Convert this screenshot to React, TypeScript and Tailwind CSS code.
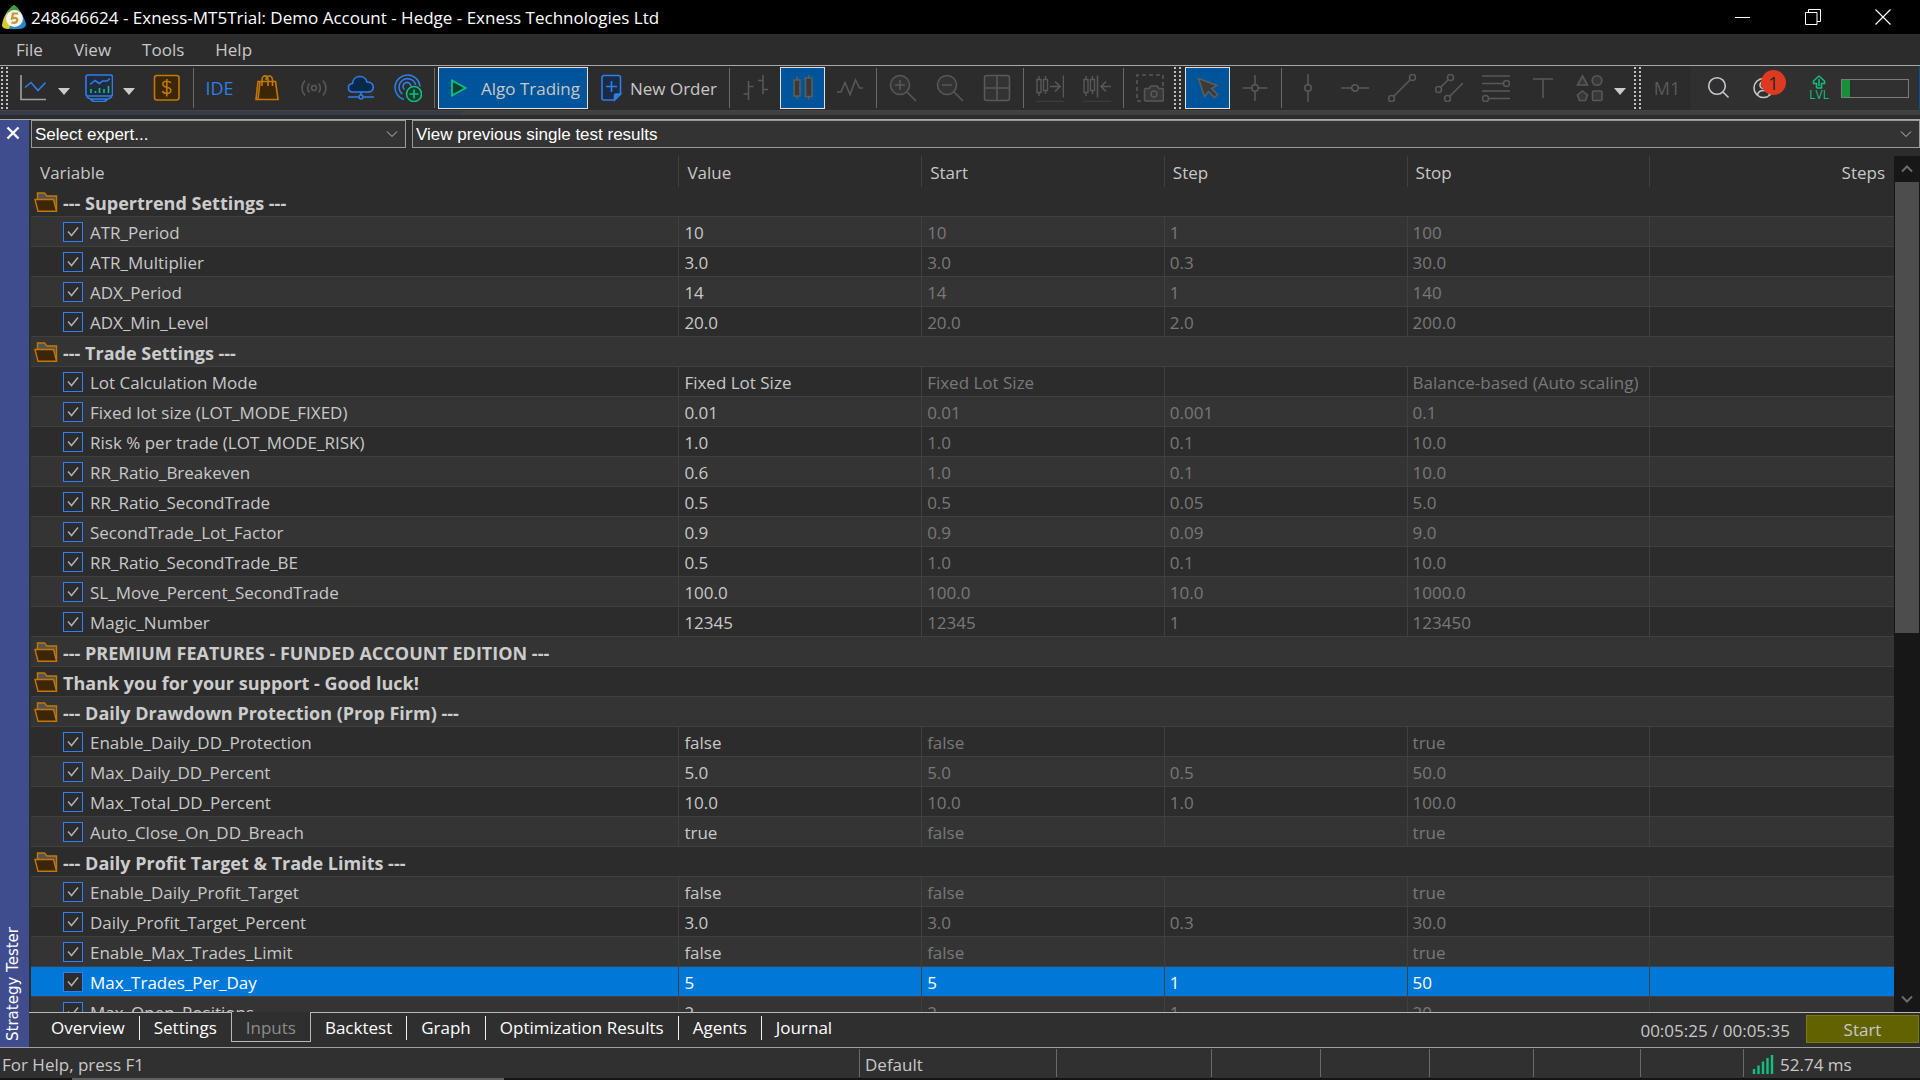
import React from 'react';

type Row = {
  group?: string;
  name?: string;
  value?: string;
  start?: string;
  step?: string;
  stop?: string;
  selected?: boolean;
};

const input = (name: string, value: string, start: string, step: string, stop: string, selected = false): Row => ({
  name, value, start, step, stop, selected
});

const rows: Row[] = [
  { group: '--- Supertrend Settings ---' },
  input('ATR_Period', '10', '10', '1', '100'),
  input('ATR_Multiplier', '3.0', '3.0', '0.3', '30.0'),
  input('ADX_Period', '14', '14', '1', '140'),
  input('ADX_Min_Level', '20.0', '20.0', '2.0', '200.0'),
  { group: '--- Trade Settings ---' },
  input('Lot Calculation Mode', 'Fixed Lot Size', 'Fixed Lot Size', '', 'Balance-based (Auto scaling)'),
  input('Fixed lot size (LOT_MODE_FIXED)', '0.01', '0.01', '0.001', '0.1'),
  input('Risk % per trade (LOT_MODE_RISK)', '1.0', '1.0', '0.1', '10.0'),
  input('RR_Ratio_Breakeven', '0.6', '1.0', '0.1', '10.0'),
  input('RR_Ratio_SecondTrade', '0.5', '0.5', '0.05', '5.0'),
  input('SecondTrade_Lot_Factor', '0.9', '0.9', '0.09', '9.0'),
  input('RR_Ratio_SecondTrade_BE', '0.5', '1.0', '0.1', '10.0'),
  input('SL_Move_Percent_SecondTrade', '100.0', '100.0', '10.0', '1000.0'),
  input('Magic_Number', '12345', '12345', '1', '123450'),
  { group: '--- PREMIUM FEATURES - FUNDED ACCOUNT EDITION ---' },
  { group: 'Thank you for your support - Good luck!' },
  { group: '--- Daily Drawdown Protection (Prop Firm) ---' },
  input('Enable_Daily_DD_Protection', 'false', 'false', '', 'true'),
  input('Max_Daily_DD_Percent', '5.0', '5.0', '0.5', '50.0'),
  input('Max_Total_DD_Percent', '10.0', '10.0', '1.0', '100.0'),
  input('Auto_Close_On_DD_Breach', 'true', 'false', '', 'true'),
  { group: '--- Daily Profit Target & Trade Limits ---' },
  input('Enable_Daily_Profit_Target', 'false', 'false', '', 'true'),
  input('Daily_Profit_Target_Percent', '3.0', '3.0', '0.3', '30.0'),
  input('Enable_Max_Trades_Limit', 'false', 'false', '', 'true'),
  input('Max_Trades_Per_Day', '5', '5', '1', '50', true),
  input('Max_Open_Positions', '2', '2', '1', '20')
];

const tabs = ['Overview', 'Settings', 'Inputs', 'Backtest', 'Graph', 'Optimization Results', 'Agents', 'Journal'];

type IconProps = { children: React.ReactNode; className?: string };

const Icon = ({ children, className = 'text-[#585858]' }: IconProps) => (
  <svg viewBox="0 0 28 28" fill="none" stroke="currentColor" strokeWidth="1.6" className={`h-7 w-7 ${className}`} aria-hidden="true">
    {children}
  </svg>
);

const Tool = ({ label, active = false, children }: { label: string; active?: boolean; children: React.ReactNode }) => (
  <button
    type="button"
    aria-label={label}
    className={`mx-px flex h-[42px] w-[45px] shrink-0 items-center justify-center ${active ? 'border border-[#e0e0e0] bg-[#005499]' : ''}`}
  >
    {children}
  </button>
);

const Divider = () => <span className="mr-0.5 ml-[3px] h-10 w-px shrink-0 bg-[#6a6a6a]" />;

const Grip = () => (
  <span className="flex h-11 w-2.5 shrink-0 items-center gap-[3px] pl-px">
    <span className="h-[42px] w-0.5 bg-[repeating-linear-gradient(#c0c0c0_0_2px,transparent_2px_4px)]" />
    <span className="h-[42px] w-0.5 bg-[repeating-linear-gradient(#c0c0c0_0_2px,transparent_2px_4px)]" />
  </span>
);

const MenuArrow = ({ label, className = 'w-[18px]' }: { label: string; className?: string }) => (
  <button type="button" aria-label={label} className={`flex h-[42px] shrink-0 items-center pt-1.5 pl-px ${className}`}>
    <svg viewBox="0 0 12 7" className="h-[7px] w-3 fill-[#cccccc]" aria-hidden="true">
      <path d="M0 0h12L6 7z" />
    </svg>
  </button>
);

const Chevron = ({ className }: { className: string }) => (
  <svg viewBox="0 0 12 8" fill="none" stroke="currentColor" className={className} aria-hidden="true">
    <path d="M1 1.5l5 5 5-5" />
  </svg>
);

const Logo = () => (
  <svg viewBox="0 0 24 24" className="h-6 w-6" aria-hidden="true">
    <path d="M12 0C6 4 1 12 0 20c0 3 3 4 7 4l5-9z" fill="#d8c92c" />
    <path d="M12 0c6 4 10 12 12 19 0 4-4 5-8 5H7l5-9z" fill="#2a86c8" />
    <path d="M12 0c4 2 6 6 7 9H5c1-3 3-7 7-9z" fill="#3f9a44" />
    <circle cx="12.5" cy="13.5" r="8.5" fill="#f4f4f0" />
    <path d="M16 8.500h-5l-1 5c4-1.500 6 0 5 2.500-.8 2.200-3.500 2.200-5.500 1.200" fill="none" stroke="#c39a2c" strokeWidth="2.200" />
  </svg>
);

const FolderIcon = () => (
  <svg viewBox="0 0 24 20" className="h-5 w-6 shrink-0" fill="none" stroke="#c47800" strokeWidth="1.400" aria-hidden="true">
    <path d="M3.500 7V1h7l2.500 3h9.500v15" fill="#555555" />
    <path d="M1 7.500h18.500l3 11.700H4z" fill="#3b2608" />
  </svg>
);

const TitleBar = () => (
  <header className="flex h-[34px] shrink-0 items-center bg-black pr-0.5 text-white">
    <span className="w-[31px] shrink-0 pl-0.5"><Logo /></span>
    <h1 className="flex-1 truncate pt-0.5 text-[17px] leading-6">248646624 - Exness-MT5Trial: Demo Account - Hedge - Exness Technologies Ltd</h1>
    <button type="button" aria-label="Minimize" className="flex h-[34px] w-[70px] items-center justify-center">
      <svg viewBox="0 0 16 16" className="h-4 w-4" stroke="white" fill="none"><path d="M0 8.500h15" /></svg>
    </button>
    <button type="button" aria-label="Restore" className="flex h-[34px] w-[70px] items-center justify-center">
      <svg viewBox="0 0 16 16" className="h-4 w-4" stroke="white" fill="none"><path d="M.5 3.500h11.500v12H.5zM3.500 3.500v-3h12v12H12" /></svg>
    </button>
    <button type="button" aria-label="Close" className="flex h-[34px] w-[70px] items-center justify-center">
      <svg viewBox="0 0 16 16" className="h-4 w-4" stroke="white" strokeWidth="1.200" fill="none"><path d="M.5.5l15 15M15.500.5l-15 15" /></svg>
    </button>
  </header>
);

const MenuBar = () => (
  <nav className="flex h-[31px] shrink-0 items-center gap-[31px] px-4 text-[17px] leading-6">
    {['File', 'View', 'Tools', 'Help'].map(item => <button key={item} type="button">{item}</button>)}
  </nav>
);

const candles = <path d="M3 5.500h4v13H3zM5 2v3.500M5 18.500V22M9.500 5.500h4v11h-4zM11.500 2v3.500M11.500 16.500V20" transform="translate(-2 0)" strokeWidth="1.400" />;

const Toolbar = () => (
  <div className="flex h-[46px] shrink-0 items-center overflow-hidden border-t border-b border-t-[#a8a8a8] border-b-[#444444]">
    <Grip />
    <Tool label="Charts">
      <Icon>
        <path d="M1 1v24.500H26" stroke="#a0a0a0" />
        <path d="M5 13.500l6-5 7 8 7.500-8" stroke="#2f7de8" />
      </Icon>
    </Tool>
    <MenuArrow label="Chart options" />
    <Tool label="Profiles">
      <Icon className="text-[#2f7de8]">
        <rect x="1" y="1" width="26.500" height="21" rx="2" fill="#202b3d" />
        <path d="M1.500 22.500c1.500 1.500 2 2 4 2.500h17.500c2-.5 2.500-1 4-2.500M6 25.500c1 1.500 1.500 2 3.500 2h9c2 0 2.500-.5 3.500-2" />
        <path d="M5 10.500l5-4 4.500 3 3-2.500L22 7l3-2.500" />
        <path d="M6 15v4M10.500 17v2M14.500 14v5M19 15v4M23.500 12v7" stroke="#10c080" />
      </Icon>
    </Tool>
    <MenuArrow label="Profile options" className="w-[21px]" />
    <Tool label="Symbols">
      <Icon className="text-[#c47800]">
        <rect x="1.500" y="1.500" width="24.500" height="24.500" rx="2.500" fill="#3b2608" />
        <path d="M18 9c-1-2-7-2.800-8 0-.8 3 2 3.800 4 4.300 2.500.6 4.500 1.500 3.700 4.200-1 2.800-7.500 2.500-8.200-.5M13.800 5v17.500" />
      </Icon>
    </Tool>
    <Divider />
    <Tool label="MetaEditor"><span className="text-lg text-[#2f7de8]">IDE</span></Tool>
    <Tool label="Market">
      <Icon className="text-[#c47800]">
        <path d="M5 7.500h17.500L25 25.500H3z" fill="#3b2608" />
        <path d="M9 12V6c0-5.500 6-5.500 6 0v6M13 6c0-5 6.500-5.500 6.500 0v6M7 7.500l-2 18" />
      </Icon>
    </Tool>
    <Tool label="Signals">
      <Icon>
        <circle cx="14" cy="14" r="2.500" />
        <path d="M9.500 9.500c-2.500 2.500-2.500 6.500 0 9M18.500 9.500c2.500 2.500 2.500 6.500 0 9M5 6.500c-4 4.500-4 10.500 0 15M23 6.500c4 4.500 4 10.500 0 15" />
      </Icon>
    </Tool>
    <Tool label="VPS">
      <Icon className="text-[#2f7de8]">
        <path d="M6 18c-6 0-6-8-.5-8.500C6 1 18 0 20 8c8 0 8 9.500 2 10z" fill="#08294a" />
        <path d="M14 18v3M1 23h10.500M16.500 23H27" />
        <circle cx="14" cy="23" r="2" />
      </Icon>
    </Tool>
    <Tool label="Copy signals">
      <Icon className="text-[#2f7de8]">
        <path d="M10 25.500A12.500 12.500 0 1 1 26 12.500M8.500 20A8.500 8.500 0 1 1 21.800 11M10.500 15.500a4 4 0 1 1 6.500-3" />
        <circle cx="20" cy="20" r="7.500" stroke="#10c080" fill="#123f2d" />
        <path d="M20 15.500v9M15.500 20h9" stroke="#10c080" />
      </Icon>
    </Tool>
    <Divider />
    <button type="button" className="ml-px flex h-[42px] w-[150px] shrink-0 items-center gap-3.5 border border-[#e0e0e0] bg-[#005499] pl-3 text-[17px] whitespace-nowrap">
      <svg viewBox="0 0 16 18" className="h-[18px] w-4 shrink-0" fill="#123f2d" stroke="#10c080" strokeWidth="1.800" aria-hidden="true">
        <path d="M1 1.500v15L14.500 9z" />
      </svg>
      <span className="pt-0.5">Algo Trading</span>
    </button>
    <button type="button" className="flex h-[42px] w-[138px] shrink-0 items-center gap-2 pl-3 text-[17px] whitespace-nowrap">
      <svg viewBox="0 0 22 28" className="h-7 w-[22px] shrink-0" fill="none" stroke="#2f7de8" strokeWidth="1.600" aria-hidden="true">
        <path d="M4 1.500h14.500a2 2 0 0 1 2 2V20l-6 6H4a2 2 0 0 1-2-2V3.500a2 2 0 0 1 2-2z" fill="#1c2b45" />
        <path d="M11.500 7v11M6 12.500h11" />
        <path d="M14.500 26v-4.500a1.500 1.500 0 0 1 1.500-1.500h4.500z" fill="#2f7de8" />
      </svg>
      <span className="pt-0.5">New Order</span>
    </button>
    <Divider />
    <Tool label="Bar chart">
      <Icon><path d="M6.500 7v19M1.500 20h5M6.500 12.500h5M21 1v19M16 6.500h5M21 15.500h5" /></Icon>
    </Tool>
    <Tool label="Candlesticks" active>
      <Icon><path d="M6.500 6h6v16h-6zM9.500 2.500V6M9.500 22v3M18 4h6.500v18.500H18zM21.200 1v3M21.200 22.500v3" transform="translate(-1.500 0)" fill="#3a3a3a" stroke="#5c5c5c" /></Icon>
    </Tool>
    <Tool label="Line chart">
      <Icon><path d="M1 18h4l4-9.500 5 12L19.500 6l4 8H27" /></Icon>
    </Tool>
    <Divider />
    <Tool label="Zoom in">
      <Icon><circle cx="11" cy="11" r="9.500" fill="#333" /><path d="M18 18l9 9M6 11h10M11 6v10" /></Icon>
    </Tool>
    <Tool label="Zoom out">
      <Icon><circle cx="11" cy="11" r="9.500" fill="#333" /><path d="M18 18l9 9M6 11h10" /></Icon>
    </Tool>
    <Tool label="Tile windows">
      <Icon><rect x="1.500" y="1.500" width="25" height="25" rx="2.500" fill="#333" /><path d="M14 1.500v25M1.500 14h25" /></Icon>
    </Tool>
    <Divider />
    <Tool label="Auto scroll">
      <Icon>{candles}<path d="M14 12.500h10M19 7.500l5 5-5 5M27.500 1.500v22" /><path d="M0 27.500h28" stroke="#3c3c3c" /></Icon>
    </Tool>
    <Tool label="Chart shift">
      <Icon>{candles}<path d="M28 12.500H18M23 7.500l-5 5 5 5M14.500 1.500v22" /><path d="M0 27.500h28" stroke="#3c3c3c" /></Icon>
    </Tool>
    <Divider />
    <Tool label="Screenshot">
      <Icon>
        <path d="M5 27H1V1h26v11" strokeDasharray="4 3" />
        <path d="M10 14.500h3l2-2.500h6l2 2.500h3a1.500 1.500 0 0 1 1.500 1.500v9.500A1.500 1.500 0 0 1 26 27H10a1.500 1.500 0 0 1-1.500-1.500V16a1.500 1.500 0 0 1 1.500-1.500z" fill="#383838" />
        <circle cx="18" cy="20" r="3" />
      </Icon>
    </Tool>
    <Grip />
    <span className="w-px shrink-0" />
    <Tool label="Cursor" active>
      <Icon><path d="M4.500 4.500l6 18 4-5 6 6 3-3-6-6 5.500-3z" fill="#3a3a3a" stroke="#5c5c5c" /></Icon>
    </Tool>
    <Tool label="Crosshair">
      <Icon><circle cx="14" cy="14" r="3.200" /><path d="M14 1v9.800M14 17.200V27M1.500 14h9.300M17.200 14h9.300" /></Icon>
    </Tool>
    <Divider />
    <Tool label="Vertical line">
      <Icon><circle cx="14" cy="14" r="3.200" /><path d="M14 0v10.800M14 17.200V28" /></Icon>
    </Tool>
    <Tool label="Horizontal line">
      <Icon><circle cx="14" cy="14" r="3.200" /><path d="M0 14h10.800M17.200 14H28" /></Icon>
    </Tool>
    <Tool label="Trend line">
      <Icon><circle cx="3.500" cy="24.500" r="3" /><circle cx="24.500" cy="3.500" r="3" /><path d="M5.700 22.300L22.300 5.700" /></Icon>
    </Tool>
    <Tool label="Channel">
      <Icon><circle cx="3.500" cy="15.500" r="3" /><circle cx="15.500" cy="3.500" r="3" /><circle cx="12.500" cy="24.500" r="3" /><path d="M5.700 13.300l7.600-7.600M14.700 22.300L28 9" /></Icon>
    </Tool>
    <Tool label="Fibonacci">
      <Icon><path d="M0 2h28M0 9.500h21M0 17h28M7 24.500h21" /><circle cx="24.500" cy="9.500" r="3" /><circle cx="3.500" cy="24.500" r="3" /></Icon>
    </Tool>
    <Tool label="Text label">
      <Icon><path d="M4 5h20M14 5v19" /></Icon>
    </Tool>
    <Tool label="Shapes">
      <Icon>
        <path d="M6.500 2L1.500 11h10zM6.500 17l5 4-2 5.500h-6l-2-5.500z" fill="#383838" />
        <circle cx="21" cy="6.500" r="4.800" fill="#383838" />
        <rect x="16.500" y="17" width="9.500" height="9.500" rx="1" fill="#383838" />
      </Icon>
    </Tool>
    <MenuArrow label="Shape options" className="w-5" />
    <Grip />
    <button type="button" className="w-12 shrink-0 text-center text-lg text-[#5a5a5a]">M1</button>
    <div className="flex h-11 flex-1 items-center gap-5 bg-[#303030] pl-3.5">
      <button type="button" aria-label="Search" className="shrink-0">
        <Icon className="text-[#c4c8cc]"><circle cx="12" cy="12" r="8.300" /><path d="M18 18l5.500 5.500" /></Icon>
      </button>
      <button type="button" aria-label="Account, 1 notification" className="relative w-8 shrink-0">
        <Icon className="text-[#c4c8cc]">
          <circle cx="10.500" cy="14" r="9.500" />
          <circle cx="10.500" cy="11" r="3.500" />
          <path d="M4.500 21c1-6 11-6 12 0" />
        </Icon>
        <span className="absolute -top-1 left-2 flex h-[25px] w-[25px] items-center justify-center rounded-full bg-[#de3a22] text-lg leading-none text-[#262626]">1</span>
      </button>
      <div className="ml-auto flex shrink-0 items-center gap-3 pr-2.5">
        <div className="flex flex-col items-center text-[#10c080]">
          <svg viewBox="0 0 14 14" className="h-3.5 w-3.5" fill="none" stroke="currentColor" strokeWidth="1.500" aria-hidden="true">
            <path d="M7 1L1.500 6v2.500H4.500V13M7 1l5.500 5v2.500H9.500V13h-5M7 4v7" />
          </svg>
          <span className="text-xs leading-3">LVL</span>
        </div>
        <div role="progressbar" aria-label="Level" aria-valuenow={12} className="h-[19px] w-[68px] border border-[#7c7c7c]">
          <div className="h-full w-[12%] bg-[#17903a]" />
        </div>
      </div>
      <span className="-ml-5 h-[42px] w-px bg-[#005499]" />
    </div>
  </div>
);

const Combo = ({ label, className }: { label: string; className: string }) => (
  <div className={`relative ${className}`}>
    <select aria-label={label} className="h-7 w-full appearance-none border border-[#9a9a9a] bg-[#333333] pt-0.5 pl-[3px] font-['Liberation_Sans',Arial,sans-serif] text-[17px] leading-5 text-white">
      <option>{label}</option>
    </select>
    <Chevron className="pointer-events-none absolute top-2.5 right-2 h-2 w-3 text-[#c4c4c4]" />
  </div>
);

const headCell = 'h-[31px] border-l border-[#404040] pt-0.5 pl-2 text-left font-normal';
const cell = 'border-b border-l border-[#404040] pt-0.5 pl-[5px] truncate';

const InputRow = ({ row, index }: { row: Row; index: number }) => {
  const stripe = index % 2 ? 'bg-[#343434]' : 'bg-[#2c2c2c]';
  if (row.group) {
    return (
      <tr className={stripe}>
        <th colSpan={6} scope="rowgroup" className="h-[30px] border-b border-[#404040] p-0 text-left font-bold">
          <div className="flex items-center gap-[5px] pl-[3px]">
            <FolderIcon />
            <span className="pt-0.5 text-lg leading-6 text-[#cccccc]">{row.group}</span>
          </div>
        </th>
      </tr>
    );
  }
  const dim = row.selected ? '' : 'text-[#787878]';
  return (
    <tr className={row.selected ? 'bg-[#0078d7] text-white' : stripe}>
      <td className="h-[30px] border-b border-[#404040] p-0 pl-8">
        <label className="relative flex items-center gap-[7px] leading-6">
          <input type="checkbox" defaultChecked className="peer h-5 w-5 appearance-none border border-[#2f80ff] bg-[#2c2c2c]" />
          <svg viewBox="0 0 20 20" className="pointer-events-none absolute left-0 hidden h-5 w-5 peer-checked:block" fill="none" stroke="#b0b0b0" strokeWidth="1.500" aria-hidden="true">
            <path d="M5 9.500l3.500 4 6.500-8" />
          </svg>
          <span className="pt-0.5">{row.name}</span>
        </label>
      </td>
      <td className={cell}>{row.value}</td>
      <td className={`${cell} ${dim}`}>{row.start}</td>
      <td className={`${cell} ${dim}`}>{row.step}</td>
      <td className={`${cell} ${dim}`}>{row.stop}</td>
      <td className={cell} />
    </tr>
  );
};

const InputsTable = () => (
  <div className="flex min-h-0 flex-1 pt-2 pl-0.5">
    <div className="min-w-0 flex-1 overflow-hidden">
      <table className="w-full table-fixed border-separate border-spacing-0 text-[17px] leading-6">
        <colgroup>
          <col className="w-[34.75%]" />
          <col className="w-[13.03%]" />
          <col className="w-[13.03%]" />
          <col className="w-[13.03%]" />
          <col className="w-[13.03%]" />
          <col />
        </colgroup>
        <thead>
          <tr>
            <th scope="col" className="h-[31px] pt-0.5 pl-[9px] text-left font-normal">Variable</th>
            <th scope="col" className={headCell}>Value</th>
            <th scope="col" className={headCell}>Start</th>
            <th scope="col" className={headCell}>Step</th>
            <th scope="col" className={headCell}>Stop</th>
            <th scope="col" className="h-[31px] border-l border-[#404040] pt-0.5 pr-[9px] text-right font-normal">Steps</th>
          </tr>
        </thead>
        <tbody>
          {rows.map((row, index) => <InputRow key={index} row={row} index={index} />)}
        </tbody>
      </table>
    </div>
    <div className="flex w-[26px] shrink-0 flex-col items-center bg-[#171717] text-[#6c6c6c]">
      <button type="button" aria-label="Scroll up" className="flex h-[26px] shrink-0 items-center">
        <Chevron className="h-2 w-3 rotate-180 stroke-2" />
      </button>
      <div className="h-[52.7%] w-6 bg-[#4d4d4d]" />
      <button type="button" aria-label="Scroll down" className="mt-auto flex h-[26px] shrink-0 items-center">
        <Chevron className="h-2 w-3 stroke-2" />
      </button>
    </div>
  </div>
);

const TabBar = () => (
  <div className="flex h-[35px] shrink-0 border-t border-[#b8b8b8] bg-[#2f2f2f] pl-2 text-[17px] leading-6">
    <div role="tablist" className="flex">
      {tabs.map((tab, index) => tab === 'Inputs'
        ? <button key={tab} type="button" role="tab" aria-selected className="-mt-px h-[30px] border border-t-0 border-[#b8b8b8] bg-[#2f2f2f] px-3.5 pt-0.5 text-[#8c8c8c]">{tab}</button>
        : (
          <div key={tab} className="flex h-[30px] items-center">
            <button type="button" role="tab" aria-selected={false} className="px-3.5 text-white">{tab}</button>
            {index !== 1 && index !== tabs.length - 1 && <span className="h-6 w-px bg-[#f0f0f0]" />}
          </div>
        ))}
    </div>
    <div className="ml-auto flex items-start gap-4 pt-0.5 pr-px">
      <span className="pt-1">00:05:25 / 00:05:35</span>
      <button type="button" className="h-7 w-[113px] border border-[#7c7c00] bg-[#626200] pt-px">Start</button>
    </div>
  </div>
);

const StatusBar = () => (
  <footer className="flex h-[33px] shrink-0 flex-col border-t border-[#a0a0a0] bg-[#303030] text-[17px] leading-6">
    <div className="flex flex-1 items-center *:h-7 *:pt-1">
      <span className="w-[859px] pl-0.5">For Help, press F1</span>
      <span className="w-[197px] border-l border-[#6a6a6a] pl-[5px]">Default</span>
      <span className="w-[155px] border-l border-[#6a6a6a]" />
      <span className="w-[109px] border-l border-[#6a6a6a]" />
      <span className="w-[109px] border-l border-[#6a6a6a]" />
      <span className="w-[104px] border-l border-[#6a6a6a]" />
      <span className="w-[107px] border-l border-[#6a6a6a]" />
      <span className="w-[103px] border-l border-[#6a6a6a]" />
      <span className="flex flex-1 items-center gap-1.5 border-l border-[#6a6a6a] pl-2">
        <svg viewBox="0 0 22 20" className="h-5 w-[22px]" stroke="#10c080" strokeWidth="2.400" aria-hidden="true">
          <path d="M2 14v5M6.500 10.500V19M11 6.500V19M15.500 3v16M20 0V19" />
        </svg>
        52.74 ms
      </span>
    </div>
    <div className="flex h-0.5 bg-[#141414] pl-[72px]"><span className="w-[432px] bg-[#606060]" /></div>
  </footer>
);

export default function App() {
  return (
    <div className="flex h-screen min-h-0 flex-col overflow-hidden bg-[#2c2c2c] font-['Open_Sans','Noto_Sans',sans-serif] text-[#c8c8c8]">
      <TitleBar />
      <MenuBar />
      <Toolbar />
      <div className="flex h-2 shrink-0 flex-col">
        <div className="flex h-1 bg-[#404040]"><span className="w-[24%] bg-[#363b4a]" /></div>
      </div>
      <main className="flex min-h-0 flex-1 border-t border-[#a8a8a8]">
        <aside className="flex w-[29px] shrink-0 flex-col items-center justify-between bg-[#3f4d8e] pt-1.5 pr-[3px] pb-1.5 text-white">
          <button type="button" aria-label="Close panel" className="h-4 w-4">
            <svg viewBox="0 0 16 16" className="h-4 w-4" stroke="white" strokeWidth="2.400" aria-hidden="true"><path d="M2.500 1.500l11 11M13.500 1.500l-11 11" /></svg>
          </button>
          <span className="rotate-180 font-['DejaVu_Sans',Verdana,sans-serif] text-[15px] leading-5 [writing-mode:vertical-rl]">Strategy Tester</span>
        </aside>
        <section className="flex min-w-0 flex-1 flex-col">
          <div className="flex shrink-0 gap-1.5 pl-0.5">
            <Combo label="Select expert..." className="w-[375px] shrink-0" />
            <Combo label="View previous single test results" className="min-w-0 flex-1" />
          </div>
          <InputsTable />
          <TabBar />
        </section>
      </main>
      <StatusBar />
    </div>
  );
}
